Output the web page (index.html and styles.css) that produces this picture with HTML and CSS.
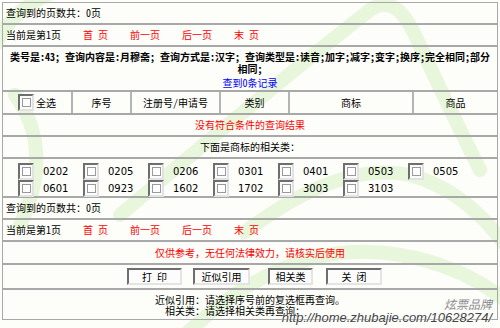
FILE: index.html
```html
<!doctype html>
<html lang="zh-CN">
<head>
<meta charset="utf-8">
<title>商标查询结果</title>
<link rel="stylesheet" href="styles.css">
</head>
<body>
<div class="page">
  <svg class="mark" viewBox="0 0 500 328" width="500" height="328" aria-hidden="true">
    <g fill="none" stroke="#e8f6dc" stroke-width="14" stroke-linecap="round">
      <path d="M-5 45 Q15 5 60 -10"/>
      <path d="M15 95 Q55 150 20 225"/>
      <path d="M120 215 Q280 80 370 10 Q395 -8 415 35 Q450 110 480 170"/>
      <path d="M245 232 Q340 160 410 175 Q465 190 505 245"/>
      <path d="M185 335 Q290 235 400 255 Q460 265 505 300"/>
    </g>
  </svg>

  <div class="sheet">
    <div class="row">查询到的页数共：0页</div>
    <div class="row pager">
      <span class="cur">当前是第1页</span>
      <a href="#">首 页</a><a href="#">前一页</a><a href="#">后一页</a><a href="#">末 页</a>
    </div>
    <div class="row query">
      <p class="cond">类号是:43; 查询内容是:月穆斋; 查询方式是:汉字; 查询类型是:读音;加字;减字;变字;换序;完全相同;部分<br>相同;</p>
      <p class="count">查到0条记录</p>
    </div>
    <div class="row head">
      <div class="cell"><span class="cb"></span>全选</div>
      <div class="cell">序号</div>
      <div class="cell">注册号/申请号</div>
      <div class="cell">类别</div>
      <div class="cell">商标</div>
      <div class="cell">商品</div>
    </div>
    <div class="row center red">没有符合条件的查询结果</div>
    <div class="row center">下面是商标的相关类：</div>
    <div class="row classes">
      <label><span class="cb"></span>0202</label>
      <label><span class="cb"></span>0205</label>
      <label><span class="cb"></span>0206</label>
      <label><span class="cb"></span>0301</label>
      <label><span class="cb"></span>0401</label>
      <label><span class="cb"></span>0503</label>
      <label><span class="cb"></span>0505</label>
      <label><span class="cb"></span>0601</label>
      <label><span class="cb"></span>0923</label>
      <label><span class="cb"></span>1602</label>
      <label><span class="cb"></span>1702</label>
      <label><span class="cb"></span>3003</label>
      <label><span class="cb"></span>3103</label>
    </div>
    <div class="row">查询到的页数共：0页</div>
    <div class="row pager">
      <span class="cur">当前是第1页</span>
      <a href="#">首 页</a><a href="#">前一页</a><a href="#">后一页</a><a href="#">末 页</a>
    </div>
    <div class="row center red notice">仅供参考，无任何法律效力，请核实后使用</div>
    <div class="row buttons">
      <button class="b1">打 印</button>
      <button class="b2">近似引用</button>
      <button class="b3">相关类</button>
      <button class="b4">关 闭</button>
    </div>
    <div class="row notes">
      <span class="lbl">近似引用：</span><span>请选择序号前的复选框再查询。</span>
      <span class="lbl">相关类：</span><span>请选择相关类再查询；</span>
    </div>
  </div>

  <div class="wm">
    <span class="wm-name">炫票品牌</span>
    <span class="wm-url">http://home.zhubajie.com/10628274/</span>
  </div>
</div>
</body>
</html>
```

FILE: styles.css
```css
body{margin:0;background:#fdfdf9;color:#000;font:10px/12px "Noto Sans Mono CJK SC","Noto Sans CJK SC",sans-serif;}
.page{position:relative;width:500px;height:328px;overflow:hidden;}
.mark{position:absolute;left:0;top:0;z-index:0;}
.sheet{position:relative;z-index:1;margin:2px 2px 0;border:1px solid #a8a8a8;}

.row{display:flex;align-items:center;height:20px;padding:0 3px;border-bottom:2px solid #a8a8a8;}
.row:last-child{border-bottom:0;}
.center{justify-content:center;}
.red{color:#f00;}
.notice{height:21px;}

.pager{gap:22px;}
.pager a{color:#f00;text-decoration:none;}

.query{display:block;box-sizing:border-box;height:45px;padding-top:4px;text-align:center;}
.query p{margin:0;line-height:12px;}
.cond{font-weight:bold;}
.query .count{margin-top:2px;color:#00f;}

.head{padding:0;height:21px;align-items:stretch;}
.head .cell{display:flex;align-items:center;justify-content:center;border-left:2px solid #b4b4b4;}
.head .cell:first-child{border-left:0;width:68px;}
.head .cell:nth-child(2){width:57px;}
.head .cell:nth-child(3){width:87px;}
.head .cell:nth-child(4){width:67px;}
.head .cell:nth-child(5){width:122px;}
.head .cell:nth-child(6){flex:1;}
.head .cb{margin-right:2px;}

.cb{display:inline-flex;align-items:center;justify-content:center;box-sizing:border-box;width:16px;height:17px;
  border:2px solid;border-color:#6e6e6e #e2e2e2 #e2e2e2 #6e6e6e;background:#fbfbfb;}
.cb::after{content:"";width:7px;height:7px;border:1px solid #9a9a9a;background:#fff;}

.classes{display:grid;grid-template-columns:repeat(7,65px);align-content:start;box-sizing:border-box;height:39px;padding:4px 0 0 15px;}
.classes label{display:flex;align-items:center;font-family:"DejaVu Sans",sans-serif;font-size:10px;}
.classes .cb{margin-right:9px;}

.buttons{height:23px;padding-left:124px;}
.buttons button{box-sizing:border-box;height:17px;padding:0;font:inherit;color:#000;background:#fcfcfc;
  border:2px solid;border-color:#6e6e6e #e4e4e4 #e4e4e4 #6e6e6e;}
.b1{width:55px;}
.b2{width:57px;margin-left:11px;}
.b3{width:45px;margin-left:18px;}
.b4{width:56px;margin-left:13px;}

.notes{display:grid;grid-template-columns:199px auto;align-content:start;box-sizing:border-box;height:29px;padding-top:4px;line-height:11px;}
.notes .lbl{text-align:right;}

.wm{position:absolute;right:8px;bottom:3px;z-index:2;display:flex;flex-direction:column;align-items:flex-end;
  font-style:italic;text-shadow:0 0 2px #fff,0 0 1px #fff;}
.wm-name{font:italic 12px/14px "Noto Sans CJK SC",sans-serif;color:#8a8a8a;}
.wm-url{font:italic 13px/14px "Liberation Sans",sans-serif;color:#444;}
```
